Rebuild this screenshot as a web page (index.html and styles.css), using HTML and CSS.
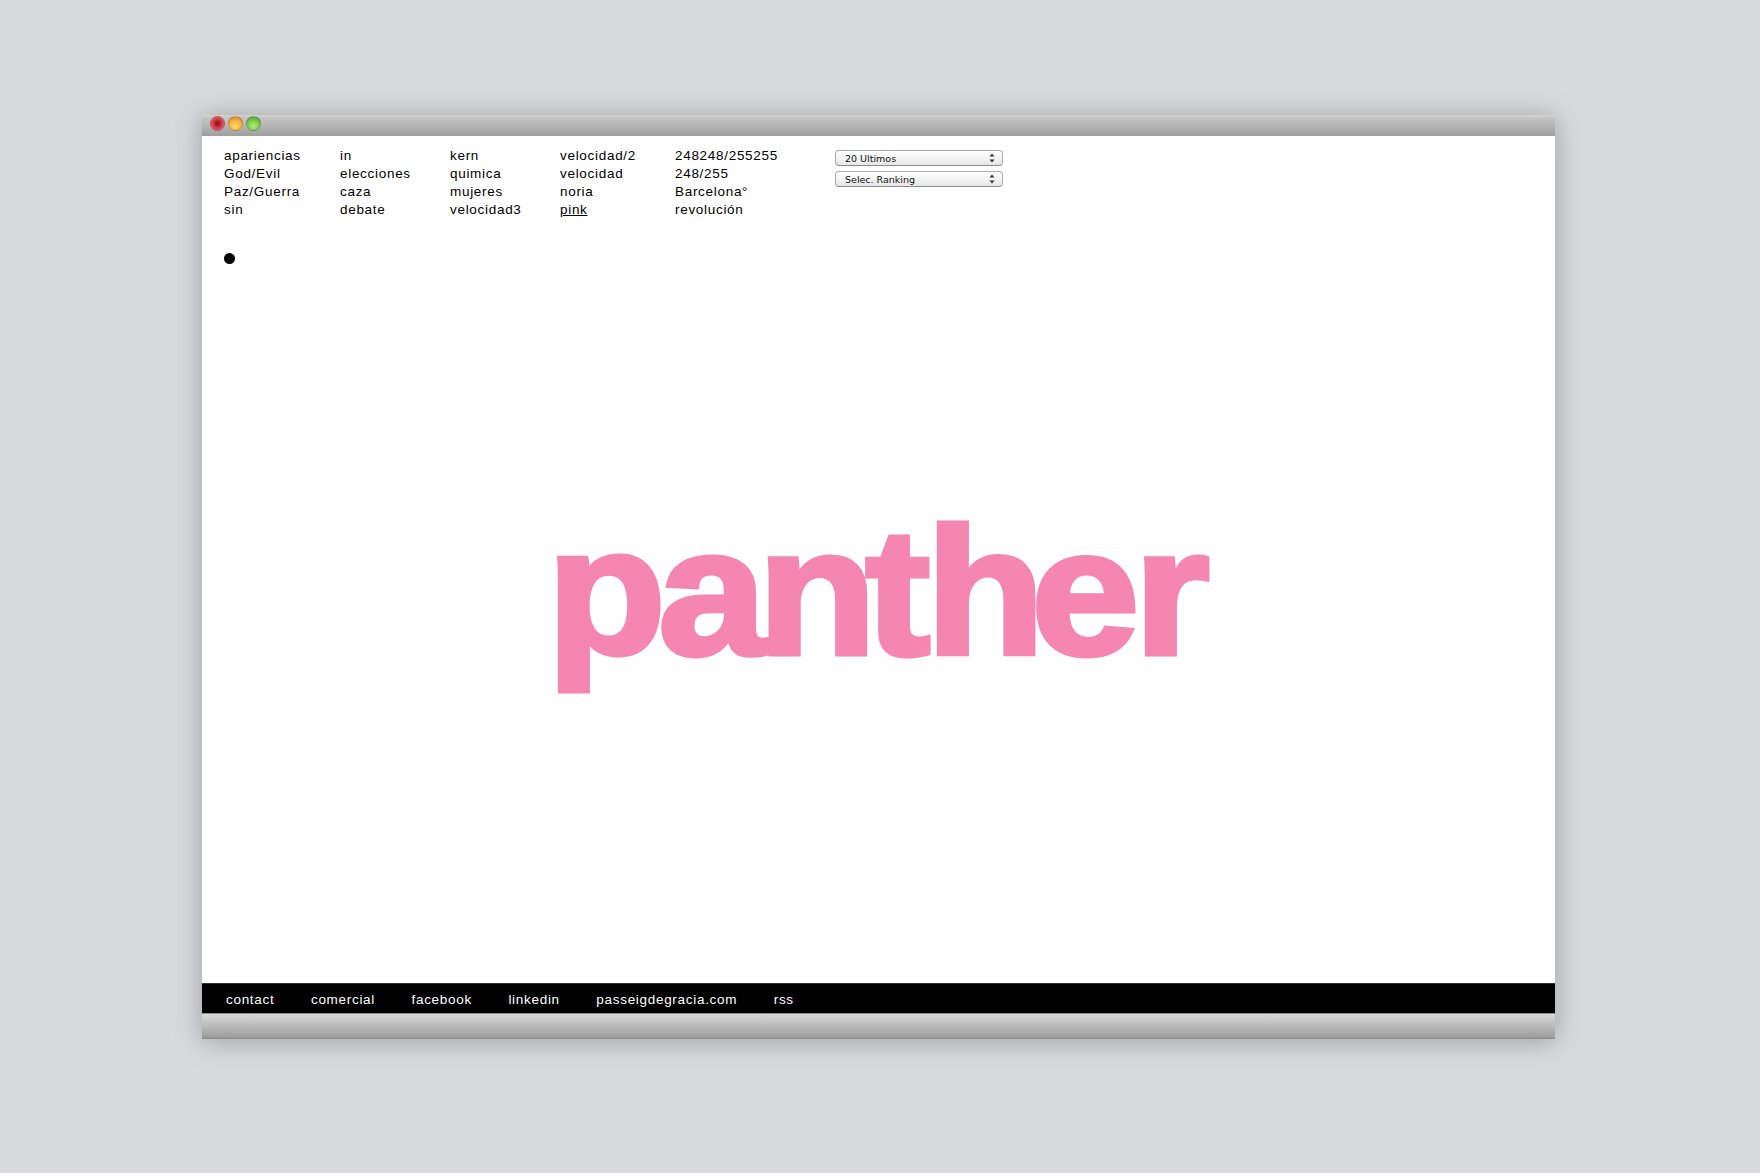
FILE: index.html
```html
<!DOCTYPE html>
<html lang="en">
<head>
  <meta charset="UTF-8">
  <title>panther</title>
  <link rel="stylesheet" href="styles.css">
</head>
<body>
  <div class="window">
    <div class="titlebar">
      <span class="light red"></span>
      <span class="light yellow"></span>
      <span class="light green"></span>
    </div>
    <div class="content">
      <div class="top">
        <ul class="col col1">
          <li>apariencias</li>
          <li>God/Evil</li>
          <li>Paz/Guerra</li>
          <li>sin</li>
        </ul>
        <ul class="col col2">
          <li>in</li>
          <li>elecciones</li>
          <li>caza</li>
          <li>debate</li>
        </ul>
        <ul class="col col3">
          <li>kern</li>
          <li>quimica</li>
          <li>mujeres</li>
          <li>velocidad3</li>
        </ul>
        <ul class="col col4">
          <li>velocidad/2</li>
          <li>velocidad</li>
          <li>noria</li>
          <li class="current">pink</li>
        </ul>
        <ul class="col col5">
          <li>248248/255255</li>
          <li>248/255</li>
          <li>Barcelona°</li>
          <li>revolución</li>
        </ul>
        <div class="selects">
          <div class="select">
            <span>20 Ultimos</span>
            <svg class="arrows" viewBox="0 0 6 10" width="6" height="10"><path d="M3 0.5 5.5 3.5H0.5ZM3 9.5 0.5 6.5H5.5Z"/></svg>
          </div>
          <div class="select">
            <span>Selec. Ranking</span>
            <svg class="arrows" viewBox="0 0 6 10" width="6" height="10"><path d="M3 0.5 5.5 3.5H0.5ZM3 9.5 0.5 6.5H5.5Z"/></svg>
          </div>
        </div>
      </div>
      <div class="dot"></div>
      <h1 class="logo">p<span class="kern-a">a</span><span class="kern-n">n</span><span class="kern-t">t</span><span class="kern-h">h</span><span class="kern-e">e</span>r</h1>
    </div>
    <div class="footer">
      <a>contact</a>
      <a>comercial</a>
      <a>facebook</a>
      <a>linkedin</a>
      <a>passeigdegracia.com</a>
      <a>rss</a>
    </div>
    <div class="bottombar"></div>
  </div>
</body>
</html>
```
FILE: styles.css
```css
body {
  margin: 0;
  height: 1173px;
  overflow: hidden;
  background-color: #d9dadc;
  font-family: "Liberation Sans", Arial, sans-serif;
}

.window {
  display: flex;
  flex-direction: column;
  width: 1353px;
  height: 924px;
  margin: 115px 0 0 202px;
  box-shadow: 0 2px 26px rgba(0, 0, 0, 0.28);
}

.titlebar {
  display: flex;
  align-items: center;
  gap: 3px;
  height: 21px;
  padding: 0 0 5px 8px;
  box-sizing: border-box;
  background: linear-gradient(#d2d2d2, #c4c4c4 15%, #9f9f9f);
}

.light {
  width: 15px;
  height: 15px;
  border-radius: 50%;
  box-sizing: border-box;
  border: 1px solid rgba(90, 90, 90, 0.3);
}

.red {
  background: radial-gradient(circle at 50% 50%, #8a1420 0, #ab1c2c 22%, #dd4a52 60%, #e68a8c);
}

.yellow {
  background: radial-gradient(circle at 50% 70%, #ffe070 0, #fbb23c 50%, #d98a3a 85%);
}

.green {
  background: radial-gradient(circle at 50% 70%, #b5ee78 0, #7fcb4c 50%, #5aa33f 85%);
}

.content {
  flex: 1;
  display: flex;
  flex-direction: column;
  background-color: #fff;
  padding: 11px 0 0 22px;
}

.top {
  display: flex;
  color: #000;
  font-size: 13.5px;
  letter-spacing: 0.7px;
  line-height: 18px;
}

.col {
  list-style: none;
  margin: 0;
  padding: 0;
}

.col1 { width: 116px; }
.col2 { width: 110px; }
.col3 { width: 110px; }
.col4 { width: 115px; }
.col5 { width: 160px; }

.current {
  text-decoration: underline;
}

.selects {
  display: flex;
  flex-direction: column;
  gap: 5px;
  width: 168px;
  padding-top: 3px;
}

.select {
  display: flex;
  justify-content: space-between;
  align-items: center;
  height: 16px;
  padding: 2px 7px 0 9px;
  box-sizing: border-box;
  border: 1px solid #a9a9a9;
  border-bottom-color: #8c8c8c;
  border-radius: 4px;
  background: linear-gradient(#fff, #f4f4f4 50%, #e6e6e6);
  font-family: "DejaVu Sans", sans-serif;
  font-size: 9.5px;
  letter-spacing: 0;
  color: #111;
}

.arrows {
  fill: #333;
  margin-top: -2px;
}

.dot {
  width: 11px;
  height: 11px;
  margin: 34px 0 0 0;
  border-radius: 50%;
  background-color: #000;
}

.logo {
  margin: 225px 0 0 323px;
  font-size: 180px;
  font-weight: bold;
  line-height: 206px;
  letter-spacing: -7px;
  color: #f486b0;
  -webkit-text-stroke: 5px #f486b0;
  transform: scaleX(1.08);
  transform-origin: 0 0;
}

/* the font is looser than the original logo, so the pairs are set by hand */
.kern-a { letter-spacing: -8px; }
.kern-n { letter-spacing: -10px; }
.kern-t { letter-spacing: -4px; }
.kern-h { letter-spacing: -12.5px; }
.kern-e { letter-spacing: -5px; }

.footer {
  display: flex;
  gap: 36.5px;
  align-items: center;
  height: 31px;
  padding: 2px 0 0 24px;
  box-sizing: border-box;
  background-color: #000;
  border-top: 1px solid #333;
  border-bottom: 1px solid #8a8a8a;
  color: #fff;
  font-size: 13.5px;
  letter-spacing: 0.7px;
}

.bottombar {
  height: 25px;
  background: linear-gradient(#dcdcdc, #cfcfcf 15%, #a0a0a0 90%, #8a8a8a);
}
```
